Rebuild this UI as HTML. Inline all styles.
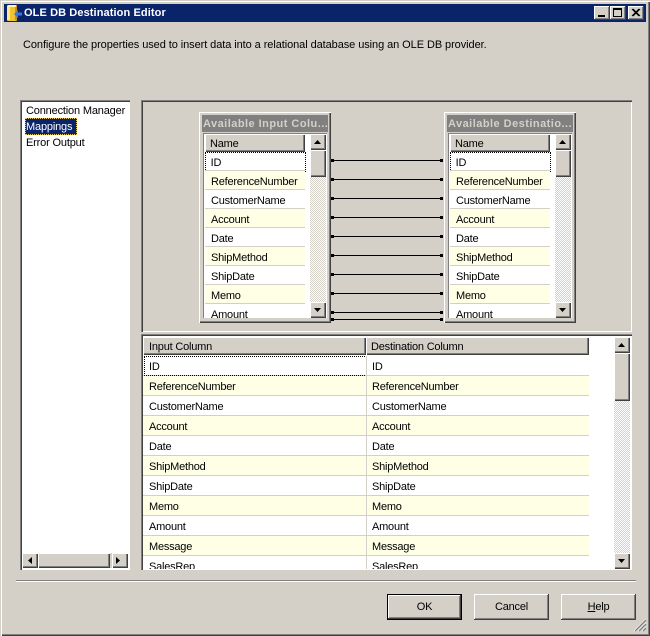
<!DOCTYPE html>
<html><head><meta charset="utf-8"><style>
html,body{margin:0;padding:0;background:#d4d0c8}
#w{position:relative;width:650px;height:636px;overflow:hidden;background:#d4d0c8;font:11px/14px "Liberation Sans",sans-serif;color:#000}
#w div,#w svg{position:absolute}
.t{white-space:nowrap}
.r3{background:#d4d0c8;box-shadow:inset -1px -1px #404040,inset 1px 1px #fff,inset -2px -2px #808080}
.btn{background:#d4d0c8;box-shadow:inset -1px -1px #404040,inset 1px 1px #fff,inset -2px -2px #808080;text-align:center;line-height:27px;height:26px;letter-spacing:-.2px}
.chk{background:conic-gradient(#fff 25%,#d4d0c8 0 50%,#fff 0 75%,#d4d0c8 0) 0 0/2px 2px}
.sunk{box-shadow:inset 1px 1px #808080,inset 2px 2px #404040,inset -1px -1px #fff}
.tb{background:#d4d0c8;box-shadow:inset 1px 1px #fff,inset -1px -1px #404040,inset -2px -2px #808080}
.row{left:0;height:18px;line-height:22px;border-bottom:1px solid #d4d0c8;white-space:nowrap;letter-spacing:-.22px}
.y{background:#ffffe6}
.w{background:#fff}
.hd{background:#d4d0c8;box-shadow:inset 1px 1px #fff,inset -1px -1px #404040,inset -2px -2px #808080;line-height:21px;white-space:nowrap;letter-spacing:-.2px}
.gr{left:0;height:19px;line-height:23px;border-bottom:1px solid #d4d0c8;white-space:nowrap;letter-spacing:-.22px}
.ln{height:1px;background:#000;left:331px;width:111px}
.dl{width:3px;height:3px;background:#000;left:331px}
.dr{width:3px;height:3px;background:#000;left:440px}
.cap{font-weight:bold;letter-spacing:.47px;line-height:19px}
</style></head><body><div id="w">
<div style="left:0;top:0;width:650px;height:636px;box-shadow:inset 1px 1px #d4d0c8,inset 2px 2px #fff,inset -1px -1px #404040,inset -2px -2px #808080"></div>
<div style="left:4px;top:4px;width:642px;height:18px;background:#0a246a"></div>
<svg style="left:6px;top:4px" width="18" height="18" viewBox="0 0 18 18"><rect x="1" y="1" width="10" height="16" rx="1" fill="#f2c230"/><rect x="1" y="2" width="3" height="14" fill="#ffe98a"/><rect x="9" y="2" width="2" height="14" fill="#c8921a"/><rect x="2" y="1" width="8" height="2" fill="#fff2b0"/><path d="M8 10l4-4v2.500h4v3h-4v2.500z" fill="#3a78d8"/></svg>
<div class="t" style="left:24px;top:6px;color:#fff;font-weight:bold;font-size:11px;letter-spacing:.1px">OLE DB Destination Editor</div>
<div class="r3" style="left:594px;top:6px;width:16px;height:14px"></div>
<div style="left:598px;top:15px;width:7px;height:2px;background:#000"></div>
<div class="r3" style="left:610px;top:6px;width:16px;height:14px"></div>
<div style="left:613px;top:8px;width:7px;height:6px;border:1px solid #000;border-top-width:2px"></div>
<div class="r3" style="left:628px;top:6px;width:16px;height:14px"></div>
<svg style="left:628px;top:6px" width="16" height="14"><path d="M4 3l7 7M5 3l7 7M11 3l-7 7M12 3l-7 7" stroke="#000" stroke-width="1" fill="none"/></svg>

<div class="t" style="left:23px;top:38px;letter-spacing:-.075px">Configure the properties used to insert data into a relational database using an OLE DB provider.</div>

<!-- Left list -->
<div style="left:20px;top:100px;width:110px;height:470px;background:#fff"></div>
<div class="sunk" style="left:20px;top:100px;width:110px;height:470px"></div>
<div class="t" style="left:26px;top:104px;letter-spacing:-.17px">Connection Manager</div>
<div style="left:25px;top:118px;width:50px;height:15px;background:#0a246a;border:1px dotted #e8c860"></div>
<div class="t" style="left:26px;top:120px;color:#fff;letter-spacing:-.17px">Mappings</div>
<div class="t" style="left:26px;top:136px;letter-spacing:-.17px">Error Output</div>
<div style="left:22px;top:553px;width:106px;height:15px;background:#d4d0c8"></div>
<div class="tb" style="left:22px;top:553px;width:16px;height:15px"></div>
<div class="tb" style="left:38px;top:553px;width:72px;height:15px"></div>
<div class="tb" style="left:112px;top:553px;width:16px;height:15px"></div>
<svg style="left:22px;top:553px" width="106" height="15"><path d="M10 4v7l-4-3.500zM94 4v7l4-3.500z" fill="#000"/></svg>

<!-- Top panel -->
<div class="sunk" style="left:141px;top:100px;width:491px;height:232px;box-shadow:inset 1px 1px #808080,inset 2px 2px #404040,inset -1px -1px #fff"></div>
<div class="ln" style="top:160px"></div><div class="ln" style="top:179px"></div><div class="ln" style="top:198px"></div><div class="ln" style="top:217px"></div><div class="ln" style="top:236px"></div><div class="ln" style="top:255px"></div><div class="ln" style="top:274px"></div><div class="ln" style="top:293px"></div><div class="ln" style="top:312px"></div><div class="ln" style="top:319px"></div>
<div class="dl" style="top:159px"></div><div class="dl" style="top:178px"></div><div class="dl" style="top:197px"></div><div class="dl" style="top:216px"></div><div class="dl" style="top:235px"></div><div class="dl" style="top:254px"></div><div class="dl" style="top:273px"></div><div class="dl" style="top:292px"></div><div class="dl" style="top:311px"></div><div class="dl" style="top:318px"></div>
<div class="dr" style="top:159px"></div><div class="dr" style="top:178px"></div><div class="dr" style="top:197px"></div><div class="dr" style="top:216px"></div><div class="dr" style="top:235px"></div><div class="dr" style="top:254px"></div><div class="dr" style="top:273px"></div><div class="dr" style="top:292px"></div><div class="dr" style="top:311px"></div><div class="dr" style="top:318px"></div>

<!-- Left table -->
<div style="left:199px;top:112px;width:132px;height:211px;background:#d4d0c8;box-shadow:inset 1px 1px #fff,inset -1px -1px #404040,inset -2px -2px #808080"></div>
<div class="t cap" style="left:202px;top:115px;width:126px;height:17px;background:#808080;color:#d4d0c8;overflow:hidden;text-indent:1px">Available Input Colu...</div>
<div style="left:203px;top:133px;width:124px;height:185px;background:#fff;overflow:hidden;box-shadow:inset 1px 1px #808080">
<div class="hd" style="left:2px;top:1px;width:100px;height:18px;text-indent:5px">Name</div>
<div class="row w" style="left:2px;top:19px;width:100px">&nbsp;&nbsp;ID</div>
<div style="left:2px;top:19px;width:99px;height:18px;border:1px dotted #000"></div>
<div class="row y" style="left:2px;top:38px;width:100px;text-indent:6px">ReferenceNumber</div>
<div class="row w" style="left:2px;top:57px;width:100px;text-indent:6px">CustomerName</div>
<div class="row y" style="left:2px;top:76px;width:100px;text-indent:6px">Account</div>
<div class="row w" style="left:2px;top:95px;width:100px;text-indent:6px">Date</div>
<div class="row y" style="left:2px;top:114px;width:100px;text-indent:6px">ShipMethod</div>
<div class="row w" style="left:2px;top:133px;width:100px;text-indent:6px">ShipDate</div>
<div class="row y" style="left:2px;top:152px;width:100px;text-indent:6px">Memo</div>
<div class="row w" style="left:2px;top:171px;width:100px;text-indent:6px">Amount</div>
<div class="chk" style="left:107px;top:1px;width:16px;height:184px"></div>
<div class="tb" style="left:107px;top:1px;width:16px;height:16px"></div>
<div class="tb" style="left:107px;top:17px;width:16px;height:27px"></div>
<div class="tb" style="left:107px;top:169px;width:16px;height:16px"></div>
<svg style="left:107px;top:1px" width="16" height="185"><path d="M4 10h7l-3.500-4zM4 174h7l-3.500 4z" fill="#000"/></svg>
</div>

<!-- Right table -->
<div style="left:444px;top:112px;width:132px;height:211px;background:#d4d0c8;box-shadow:inset 1px 1px #fff,inset -1px -1px #404040,inset -2px -2px #808080"></div>
<div class="t cap" style="left:447px;top:115px;width:126px;height:17px;background:#808080;color:#d4d0c8;overflow:hidden;text-indent:1px">Available Destinatio...</div>
<div style="left:448px;top:133px;width:124px;height:185px;background:#fff;overflow:hidden;box-shadow:inset 1px 1px #808080">
<div class="hd" style="left:2px;top:1px;width:100px;height:18px;text-indent:5px">Name</div>
<div class="row w" style="left:2px;top:19px;width:100px">&nbsp;&nbsp;ID</div>
<div style="left:2px;top:19px;width:99px;height:18px;border:1px dotted #000"></div>
<div class="row y" style="left:2px;top:38px;width:100px;text-indent:6px">ReferenceNumber</div>
<div class="row w" style="left:2px;top:57px;width:100px;text-indent:6px">CustomerName</div>
<div class="row y" style="left:2px;top:76px;width:100px;text-indent:6px">Account</div>
<div class="row w" style="left:2px;top:95px;width:100px;text-indent:6px">Date</div>
<div class="row y" style="left:2px;top:114px;width:100px;text-indent:6px">ShipMethod</div>
<div class="row w" style="left:2px;top:133px;width:100px;text-indent:6px">ShipDate</div>
<div class="row y" style="left:2px;top:152px;width:100px;text-indent:6px">Memo</div>
<div class="row w" style="left:2px;top:171px;width:100px;text-indent:6px">Amount</div>
<div class="chk" style="left:107px;top:1px;width:16px;height:184px"></div>
<div class="tb" style="left:107px;top:1px;width:16px;height:16px"></div>
<div class="tb" style="left:107px;top:17px;width:16px;height:27px"></div>
<div class="tb" style="left:107px;top:169px;width:16px;height:16px"></div>
<svg style="left:107px;top:1px" width="16" height="185"><path d="M4 10h7l-3.500-4zM4 174h7l-3.500 4z" fill="#000"/></svg>
</div>

<!-- Grid -->
<div style="left:141px;top:334px;width:491px;height:236px;background:#fff"></div>
<div style="left:143px;top:337px;width:446px;height:232px;overflow:hidden;background:#fff">
<div class="hd" style="left:0;top:0;width:223px;height:18px;text-indent:6px">Input Column</div>
<div class="hd" style="left:223px;top:0;width:223px;height:18px;text-indent:5px">Destination Column</div>
<div class="gr w" style="top:19px;width:446px;text-indent:6px">ID<div style="left:223px;top:0;text-indent:6px">ID</div></div>
<div style="left:1px;top:19px;width:221px;height:18px;border:1px dotted #000"></div>
<div class="gr y" style="top:39px;width:446px;text-indent:6px">ReferenceNumber<div style="left:223px;top:0;text-indent:6px">ReferenceNumber</div></div>
<div class="gr w" style="top:59px;width:446px;text-indent:6px">CustomerName<div style="left:223px;top:0;text-indent:6px">CustomerName</div></div>
<div class="gr y" style="top:79px;width:446px;text-indent:6px">Account<div style="left:223px;top:0;text-indent:6px">Account</div></div>
<div class="gr w" style="top:99px;width:446px;text-indent:6px">Date<div style="left:223px;top:0;text-indent:6px">Date</div></div>
<div class="gr y" style="top:119px;width:446px;text-indent:6px">ShipMethod<div style="left:223px;top:0;text-indent:6px">ShipMethod</div></div>
<div class="gr w" style="top:139px;width:446px;text-indent:6px">ShipDate<div style="left:223px;top:0;text-indent:6px">ShipDate</div></div>
<div class="gr y" style="top:159px;width:446px;text-indent:6px">Memo<div style="left:223px;top:0;text-indent:6px">Memo</div></div>
<div class="gr w" style="top:179px;width:446px;text-indent:6px">Amount<div style="left:223px;top:0;text-indent:6px">Amount</div></div>
<div class="gr y" style="top:199px;width:446px;text-indent:6px">Message<div style="left:223px;top:0;text-indent:6px">Message</div></div>
<div class="gr w" style="top:219px;width:446px;text-indent:6px">SalesRep<div style="left:223px;top:0;text-indent:6px">SalesRep</div></div>
<div style="left:223px;top:19px;width:1px;height:220px;background:#d4d0c8"></div>
</div>
<div class="chk" style="left:614px;top:337px;width:16px;height:232px"></div>
<div class="tb" style="left:614px;top:337px;width:16px;height:16px"></div>
<div class="tb" style="left:614px;top:353px;width:16px;height:48px"></div>
<div class="tb" style="left:614px;top:553px;width:16px;height:16px"></div>
<svg style="left:614px;top:337px" width="16" height="232"><path d="M4 10h7l-3.500-4zM4 222h7l-3.500 4z" fill="#000"/></svg>
<div class="sunk" style="left:141px;top:334px;width:491px;height:236px;background:transparent"></div>

<div style="left:16px;top:580px;width:620px;height:1px;background:#808080"></div>
<div style="left:16px;top:581px;width:620px;height:1px;background:#fff"></div>

<div class="btn" style="left:387px;top:594px;width:75px;box-shadow:inset -1px -1px #000,inset 1px 1px #000,inset -2px -2px #404040,inset 2px 2px #fff,inset -3px -3px #808080">OK</div>
<div class="btn" style="left:474px;top:594px;width:75px">Cancel</div>
<div class="btn" style="left:561px;top:594px;width:75px"><u>H</u>elp</div>
<svg style="left:632px;top:617px" width="16" height="16"><path d="M2 14L14 2M6 14L14 6M10 14L14 10" stroke="#fff" stroke-width="1" fill="none"/><path d="M3 14L14 3M7 14L14 7M11 14L14 11" stroke="#808080" stroke-width="1.300" fill="none"/></svg>
</div></body></html>
